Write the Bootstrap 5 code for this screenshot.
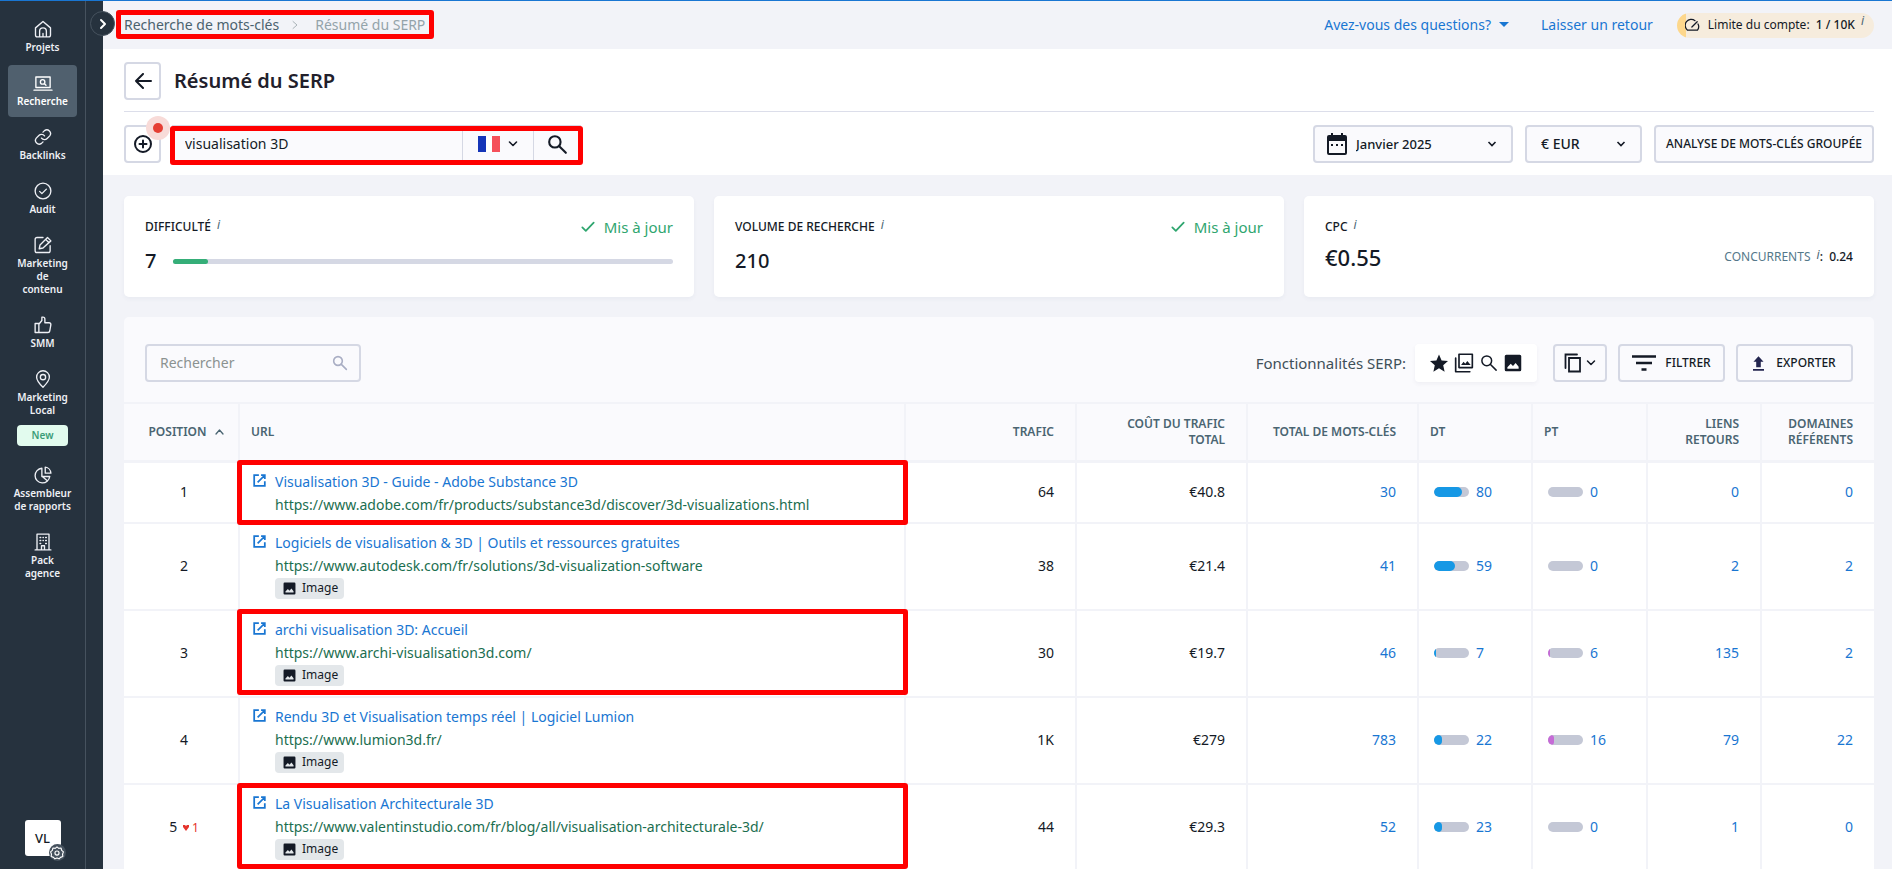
<!DOCTYPE html>
<html lang="fr">
<head>
<meta charset="utf-8">
<meta name="viewport" content="width=device-width, initial-scale=1">
<title>Résumé du SERP</title>
<link href="https://cdn.jsdelivr.net/npm/bootstrap@5.3.0/dist/css/bootstrap.min.css" rel="stylesheet">
<style>
:root{--ink:#141a26;--blue:#1976d2;--line:#d5d8e4;--grid:#f2f3f8;--navy:#26323e;--slate:#4a6572}
body{font:14px/20px "Noto Sans",sans-serif;color:var(--ink);background:var(--grid);border-top:1px solid var(--blue);height:100vh;overflow:hidden}
a{color:var(--blue);text-decoration:none}
.icon{display:block;flex:none;fill:none;stroke:currentColor;stroke-width:2;stroke-linecap:round;stroke-linejoin:round}
.solid{fill:currentColor;stroke:none}

.side{width:103px;background:var(--navy);z-index:2}
.side-main{width:86px;border-right:1px solid #46525e}
.side-nav{gap:2px;padding-top:10px}
.side-link{width:69px;padding:9px 0;color:#eef0f5;font-size:10px;line-height:13px;font-weight:600;text-align:center;border-radius:4px;display:flex;flex-direction:column;align-items:center;gap:3px}
.side-link .icon{stroke-width:1.8}
.side-link.active{background:#50606e;color:#fff}
.new-tag{width:51px;height:21px;line-height:21px;background:#e2fbee;color:#3c9d78;border-radius:4px;margin-top:5px}
.side-toggle{top:10px;right:-12px;width:25px;height:25px;border-radius:50%;border:1px solid #46525e;background:var(--navy);color:#fff}
.avatar{width:36px;height:36px;margin:auto 0 13px;background:#fff;border-radius:3px;font-size:13px;line-height:36px;font-weight:500;color:var(--ink)}
.avatar-gear{right:-5px;bottom:-5px;width:17px;height:17px;border-radius:50%;background:#46525e;color:#fff}

.page{overflow:auto;scrollbar-width:none;min-width:0}
.page::-webkit-scrollbar{display:none}
.topbar{height:48px;padding:0 18px 0 21px}
.crumb-link{color:#4b626e}
.crumb-now{color:#94a3aa}
.feedback{margin:0 24px 0 32px}
.limit{height:25px;padding:0 10px 0 8px;border-radius:13px;background:linear-gradient(90deg,#fdd78c 9px,#f6ecdd 9px);font-size:12px}
.limit b{font-weight:500}
.tip{font-size:12px;line-height:16px;font-style:italic;font-weight:400;color:#4a6572;align-self:flex-start;margin-left:6px}
.head{background:#fff;padding:0 18px 0 21px}
.head-title{padding:13px 0 11px;border-bottom:1px solid #dcdeea;gap:13px}
.head-title h1{font-size:20px;line-height:28px;font-weight:600;color:#22202b}
.head-tools{padding:13px 0 12px}
.ctl{height:38px;border:2px solid var(--line);border-radius:4px;background:#fafafd;color:var(--ink);font-size:12px;font-weight:500;padding:0;display:flex;align-items:center;justify-content:center}
.ctl.square{width:37px;background:#fff}
.dot{top:-9px;right:-9px;width:24px;height:24px;border-radius:50%;background:#f8dbd8}
.dot::after{content:"";position:absolute;inset:7px;border-radius:50%;background:#e53e33}
.kw{height:38px;border:1px solid var(--line);background:#fafafd;margin-left:11px}
.kw input{width:289px;border:0;background:none;padding:0 0 0 12px;color:var(--ink);outline:0}
.kw button{border:0;border-left:1px solid var(--line);background:none;color:var(--ink)}
.flag-btn{width:71px}
.find-btn{width:47px}
select.ctl{appearance:none;display:block;font-size:14px;background:#fafafd url("data:image/svg+xml,%3Csvg xmlns='http://www.w3.org/2000/svg' viewBox='0 0 10 10'%3E%3Cpath d='M1.500 3l3.500 3.500L8.500 3' fill='none' stroke='%23141a26' stroke-width='1.600'/%3E%3C/svg%3E") no-repeat right 14px center/10px}
select.month{width:200px;padding-left:41px;font-size:13px}
select.money{width:117px;padding-left:14px}
.cal{left:14px;top:8px;pointer-events:none}
.bulk{width:220px}

/* red review frames drawn over the page */
.framed{position:relative}
.framed::after{content:"";position:absolute;inset:var(--f,-2px -4px 1px -3px);border:5px solid #f00;border-radius:3px;pointer-events:none;z-index:1}
.frame-crumb{--f:-5px -9px -4px -8px}
.frame-kw{--f:0 -3px -3px -3px}
.frame-first{--f:-3px -4px -3px -3px}

.stats{padding:21px 18px 20px 21px;display:grid;grid-template-columns:repeat(3,1fr);gap:20px}
.stat{background:#fff;border-radius:5px;box-shadow:0 2px 4px rgba(60,70,110,.05);height:101px;padding:19px 21px}
.stat h2{font-size:12px;line-height:24px;font-weight:500;margin:0}
.stat h2 .tip{line-height:20px}
.stat .value{font-size:20px;line-height:28px;font-weight:500}
.stat .value.price{font-size:22px}
.fresh{color:#2fa66f;font-size:15px}
.meter{height:5px;border-radius:3px;background:var(--line);margin-left:17px}
.meter div{height:5px;border-radius:3px;background:#35ae78}
.rival{font-size:12px;color:#54788a}
.rival b{color:var(--ink);font-weight:500}

.panel{margin:0 18px 0 21px;background:#fafafd;border-radius:5px 5px 0 0;overflow:clip}
.tools{height:85px;padding:7px 21px 0}
.filter-box{width:216px;height:38px;border:2px solid var(--line);border-radius:4px;padding:0 11px 0 13px;color:#a9aec4}
.filter-box input{border:0;background:none;outline:0;width:160px;padding:0}
.filter-box input::placeholder{color:#8b9291}
.serp-label{color:#3f5059;font-size:15px}
.serp{background:#fff;border-radius:4px;height:38px;width:122px;margin:0 16px 0 9px;gap:6px;box-shadow:0 2px 4px rgba(60,70,110,.06)}
.grid-table{width:100%;table-layout:fixed;border-top:2px solid var(--grid)}
.grid-table th{background:#fafafd;color:var(--slate);font-size:12px;line-height:16px;font-weight:600;height:58px;border-bottom:3px solid var(--grid)}
.grid-table td{background:#fff;border-bottom:2px solid var(--grid)}
.grid-table th,.grid-table td{border-right:2px solid var(--grid);padding:0 21px}
.grid-table tr>:last-child{border-right:0}
.grid-table .num{text-align:right}
.grid-table .pos{text-align:center;padding:0 0 0 6px}
.grid-table .res{padding:7px 12px 6px}
.grid-table .bar{padding:0 0 0 15px}
.grid-table th.pos{padding-left:10px}
.grid-table th.res,.grid-table th.bar{padding:0 11px}
.res-line{line-height:23px;padding-left:23px;position:relative}
.res-line .icon{position:absolute;left:0;top:3px;color:var(--blue)}
.res-url{line-height:23px;padding-left:23px;color:#1b6e50;overflow-wrap:anywhere}
.img-tag{display:inline-flex;align-items:center;gap:6px;height:21px;padding:0 6px 0 8px;margin:1px 0 4px 23px;border-radius:4px;background:#e3e7ea;font-size:12px;vertical-align:top}
.drop{color:#e5342d;font-size:12px;margin-left:2px}
.score{display:flex;align-items:center;gap:7px}
.pill{width:35px;height:10px;border-radius:5px;background:#c4c8d6;overflow:hidden}
.pill div{height:10px;border-radius:5px;background:#1698e5}
.pill .pt{background:#c56bd6}
</style>
<script src="https://cdn.jsdelivr.net/npm/bootstrap@5.3.0/dist/js/bootstrap.bundle.min.js"></script>
</head>
<body class="d-flex">
<svg class="d-none">
  <symbol id="open" viewBox="0 0 24 24"><path d="M11 3.500H3.500v17h17V13M14.500 3.500h6v6M20 4L9 15" stroke-linecap="butt" stroke-linejoin="miter" stroke-width="2.800"/></symbol>
  <symbol id="picture" viewBox="0 0 24 24"><path fill-rule="evenodd" d="M3 1h18a2 2 0 0 1 2 2v18a2 2 0 0 1-2 2H3a2 2 0 0 1-2-2V3a2 2 0 0 1 2-2zm1.500 18.500h15v-2.500l-4-5-3.500 4-3-3-4.500 4.500z"/></symbol>
  <symbol id="search" viewBox="0 0 24 24"><circle cx="9" cy="9" r="6.500"/><path d="M14 14l7.500 7.500"/></symbol>
  <symbol id="down" viewBox="0 0 10 10"><path d="M1.500 3l3.500 3.500L8.500 3"/></symbol>
  <symbol id="check" viewBox="0 0 16 16"><path d="M1.500 8.500l4 4L14.500 3"/></symbol>
</svg>

<aside class="side h-100 flex-shrink-0 position-relative">
  <div class="side-main h-100 d-flex flex-column align-items-center">
    <nav class="side-nav d-flex flex-column align-items-center" aria-label="Principal">
      <a class="side-link" href="#"><svg class="icon" width="18" height="18" viewBox="0 0 24 24"><path d="M2 10.500L12 2l10 8.500V20a2.500 2.500 0 0 1-2.500 2.500h-15A2.500 2.500 0 0 1 2 20zM7.500 22V15a4.500 4.500 0 0 1 9 0v7M12 18v4"/></svg>Projets</a>
      <a class="side-link active" href="#"><svg class="icon" width="20" height="18" viewBox="0 0 26 24"><path d="M3.500 4h19v14h-19zM1 21.500h24"/><circle cx="12.500" cy="10.500" r="3"/><path d="M15 13l2 2"/></svg>Recherche</a>
      <a class="side-link" href="#"><svg class="icon" width="18" height="18" viewBox="0 0 24 24"><path d="M10 13.500a5 5 0 0 0 7.500.5l3.500-3.500a5 5 0 0 0-7-7L12 5.500M14 10.500a5 5 0 0 0-7.500-.5L3 13.500a5 5 0 0 0 7 7l2-2"/></svg>Backlinks</a>
      <a class="side-link" href="#"><svg class="icon" width="18" height="18" viewBox="0 0 24 24"><circle cx="12" cy="12" r="10.500"/><path d="M7.500 12.500l3 3 6-6"/></svg>Audit</a>
      <a class="side-link" href="#"><svg class="icon" width="18" height="18" viewBox="0 0 24 24"><path d="M12 2H4a2.500 2.500 0 0 0-2.500 2.500v15A2.500 2.500 0 0 0 4 22h15a2.500 2.500 0 0 0 2.500-2.500V13M7 17l1-5L18 2l4.500 4.500L12 16zM15.500 4.500L20 9"/></svg>Marketing<br>de<br>contenu</a>
      <a class="side-link" href="#"><svg class="icon" width="18" height="18" viewBox="0 0 24 24"><path d="M1.500 10h5v12h-5zM6.500 11l4-5V1.500h1.500a2.500 2.500 0 0 1 2.500 2.500v5H20a2.500 2.500 0 0 1 2.500 2.500L21 20a2.500 2.500 0 0 1-2.500 2h-12"/></svg>SMM</a>
      <a class="side-link" href="#"><svg class="icon" width="18" height="18" viewBox="0 0 24 24"><path d="M12 23C8 19 3.500 14.500 3.500 9.500a8.500 8.500 0 0 1 17 0C20.500 14.500 16 19 12 23z"/><circle cx="12" cy="9.500" r="3.500"/></svg><span>Marketing<br>Local</span><span class="new-tag">New</span></a>
      <a class="side-link" href="#"><svg class="icon" width="18" height="18" viewBox="0 0 24 24"><path d="M10.500 3A9.800 9.800 0 1 0 21 14H10.500zM15 1.500V9.500h7.500A8.500 8.500 0 0 0 15 1.500zM11 14l6 5"/></svg>Assembleur<br>de rapports</a>
      <a class="side-link" href="#"><svg class="icon" width="18" height="18" viewBox="0 0 24 24"><path d="M4 22.500V1.500h16v21M1.500 22.500h21M10 22v-5h4v5M8 6h1M12 6h.5M15.500 6h1M8 10h1M12 10h.5M15.500 10h1M8 14h1M15.500 14h1"/></svg>Pack<br>agence</a>
    </nav>
    <button class="avatar border-0 p-0 position-relative" type="button">VL
      <span class="avatar-gear position-absolute d-flex align-items-center justify-content-center"><svg class="icon" width="14" height="14" viewBox="0 0 24 24"><path d="M12 1.500l3 2.500 4-.500 1 4 3 2.500-1.500 4 .5 4-4 1.500L15.500 22 12 20.500 8.500 22 6 19.500 2 18l.5-4L1 10l3-2.500 1-4 4 .5z"/><circle cx="12" cy="12" r="3.500"/></svg></span>
    </button>
  </div>
  <button class="side-toggle position-absolute p-0 d-flex align-items-center justify-content-center" type="button" aria-label="Ouvrir le menu"><svg class="icon" width="12" height="12" viewBox="0 0 12 12"><path d="M4 2l4 4-4 4"/></svg></button>
</aside>

<main class="page flex-fill h-100">
  <header class="topbar d-flex align-items-center">
    <nav class="framed frame-crumb d-flex align-items-center" aria-label="Fil d’Ariane">
      <a class="crumb-link" href="#">Recherche de mots-clés</a>
      <svg class="icon mx-2" width="16" height="10" viewBox="0 0 14 10" style="color:#aab3b8;stroke-width:1"><path d="M5 1.500L9 5 5 8.500"/></svg>
      <span class="crumb-now ms-1">Résumé du SERP</span>
    </nav>
    <div class="ms-auto d-flex align-items-center">
      <a href="#" class="d-flex align-items-center">Avez-vous des questions? <svg class="icon solid ms-2" width="10" height="6" viewBox="0 0 10 6"><path d="M0 0h10L5 5z"/></svg></a>
      <a href="#" class="feedback">Laisser un retour</a>
      <div class="limit d-flex align-items-center">
        <svg class="icon me-2" width="15" height="15" viewBox="0 0 24 24"><path d="M16 4.300A9.500 9.500 0 0 0 4 19.500h16a9.500 9.500 0 0 0 .8-10M11 14.500L19.500 6"/></svg>
        <span>Limite du compte:&nbsp; <b>1 / 10K</b></span><span class="tip">i</span>
      </div>
    </div>
  </header>

  <section class="head">
    <div class="head-title d-flex align-items-center">
      <button class="ctl square" type="button" aria-label="Retour"><svg class="icon" width="18" height="16" viewBox="0 0 18 16"><path d="M17 8H2M9 1L2 8l7 7"/></svg></button>
      <h1 class="mb-0">Résumé du SERP</h1>
    </div>
    <div class="head-tools d-flex align-items-center">
      <div class="position-relative">
        <button class="ctl square" type="button" aria-label="Ajouter"><svg class="icon" width="18" height="18" viewBox="0 0 18 18"><circle cx="9" cy="9" r="8"/><path d="M9 5.500v7M5.500 9h7"/></svg></button>
        <span class="dot position-absolute"></span>
      </div>
      <form class="kw framed frame-kw d-flex" onsubmit="return false">
        <input type="text" value="visualisation 3D" aria-label="Mot-clé">
        <button class="flag-btn d-flex align-items-center justify-content-center" type="button" aria-label="Pays : France">
          <svg width="22" height="16" viewBox="0 0 22 16"><path fill="#1535b8" d="M0 0h8v16H0z"/><path fill="#fff" d="M8 0h6v16H8z"/><path fill="#f5505a" d="M14 0h8v16h-8z"/></svg>
          <svg class="icon ms-2" width="10" height="10" style="stroke-width:1.6"><use href="#down"/></svg>
        </button>
        <button class="find-btn d-flex align-items-center justify-content-center p-0" type="submit" aria-label="Rechercher"><svg class="icon" width="21" height="21" style="stroke-width:2.4"><use href="#search"/></svg></button>
      </form>
      <div class="ms-auto d-flex" style="gap:12px">
        <div class="position-relative">
          <select class="ctl month" aria-label="Mois"><option>Janvier 2025</option></select>
          <svg class="icon solid cal position-absolute" width="20" height="22" viewBox="0 0 20 22"><path fill-rule="evenodd" d="M4 0h2v2h8V0h2v2h2a2 2 0 0 1 2 2v16a2 2 0 0 1-2 2H2a2 2 0 0 1-2-2V4a2 2 0 0 1 2-2h2zM2 8v12h16V8zM4 11h2v2H4zm5 0h2v2H9zm5 0h2v2h-2z"/></svg>
        </div>
        <select class="ctl money" aria-label="Devise"><option>€ EUR</option></select>
        <button class="ctl bulk" type="button">ANALYSE DE MOTS-CLÉS GROUPÉE</button>
      </div>
    </div>
  </section>

  <section class="stats">
    <article class="stat">
      <div class="d-flex justify-content-between"><h2 class="d-flex">DIFFICULTÉ<span class="tip">i</span></h2><span class="fresh d-flex align-items-center gap-2"><svg class="icon" width="16" height="14"><use href="#check"/></svg>Mis à jour</span></div>
      <div class="d-flex align-items-center mt-2"><span class="value">7</span><div class="meter flex-fill"><div style="width:7%"></div></div></div>
    </article>
    <article class="stat">
      <div class="d-flex justify-content-between"><h2 class="d-flex">VOLUME DE RECHERCHE<span class="tip">i</span></h2><span class="fresh d-flex align-items-center gap-2"><svg class="icon" width="16" height="14"><use href="#check"/></svg>Mis à jour</span></div>
      <div class="value mt-2">210</div>
    </article>
    <article class="stat">
      <h2 class="d-flex">CPC<span class="tip">i</span></h2>
      <div class="d-flex align-items-center justify-content-between mt-1"><span class="value price">€0.55</span><span class="rival d-flex">CONCURRENTS<span class="tip">i</span><b>:&nbsp; 0.24</b></span></div>
    </article>
  </section>

  <section class="panel">
    <div class="tools d-flex align-items-center">
      <label class="filter-box d-flex align-items-center justify-content-between"><input type="search" placeholder="Rechercher" aria-label="Rechercher"><svg class="icon" width="16" height="16" style="stroke-width:2.4"><use href="#search"/></svg></label>
      <span class="serp-label ms-auto">Fonctionnalités SERP:</span>
      <div class="serp d-flex align-items-center justify-content-center">
        <svg class="icon solid" width="18" height="18" viewBox="0 0 24 24"><path d="M12 .5l3.500 8 8.500.8-6.400 5.700 1.900 8.500L12 19l-7.500 4.500L6.400 15 0 9.300l8.500-.8z"/></svg>
        <svg class="icon" width="20" height="20" viewBox="0 0 24 24"><path d="M6 1.500h16v16H6zM2 6v16.500h17"/><path class="solid" d="M8.500 14.500l3-4 2 2.500 2.500-3.500 4 5z"/></svg>
        <svg class="icon" width="18" height="18"><use href="#search"/></svg>
        <svg class="icon solid" width="18" height="18"><use href="#picture"/></svg>
      </div>
      <div class="d-flex" style="gap:11px">
        <button class="ctl gap-1" style="width:54px" type="button" aria-label="Copier"><svg class="icon" width="18" height="20" viewBox="0 0 18 20" style="stroke-width:1.800;stroke-linejoin:miter"><path d="M1.500 15V1.500H13M5 5h11v13.500H5z"/></svg><svg class="icon" width="10" height="10" style="stroke-width:1.500"><use href="#down"/></svg></button>
        <button class="ctl" style="width:107px;gap:9px" type="button"><svg class="icon" width="24" height="18" viewBox="0 0 24 18" style="stroke-linecap:butt;stroke-width:2.500"><path d="M0 2.500h24M4 9h16M9.500 15.500h5"/></svg>FILTRER</button>
        <button class="ctl" style="width:117px;gap:12px" type="button"><svg class="icon solid" width="11" height="15" viewBox="0 0 12 16" style="color:#23254f"><path d="M6 0l5.500 6H8.500v6h-5V6H.5zM0 14h12v2H0z"/></svg>EXPORTER</button>
      </div>
    </div>
    <table class="grid-table">
      <colgroup><col style="width:115px"><col><col style="width:171px"><col style="width:171px"><col style="width:171px"><col style="width:114px"><col style="width:115px"><col style="width:114px"><col style="width:113px"></colgroup>
      <thead><tr>
        <th class="pos"><span class="d-inline-flex align-items-center gap-2">POSITION <svg class="icon" width="9" height="6" viewBox="0 0 9 6" style="stroke-width:1.300"><path d="M1 5l3.500-4L8 5"/></svg></span></th>
        <th class="res">URL</th><th class="num">TRAFIC</th><th class="num">COÛT DU TRAFIC TOTAL</th><th class="num">TOTAL DE MOTS-CLÉS</th><th class="bar">DT</th><th class="bar">PT</th><th class="num">LIENS RETOURS</th><th class="num">DOMAINES RÉFÉRENTS</th>
      </tr></thead>
      <tbody>
      <tr>
        <td class="pos">1</td>
        <td class="res framed frame-first"><div class="res-line"><svg class="icon" width="15" height="15"><use href="#open"/></svg><a href="#">Visualisation 3D - Guide - Adobe Substance 3D</a></div><div class="res-url">https://www.adobe.com/fr/products/substance3d/discover/3d-visualizations.html</div></td>
        <td class="num">64</td><td class="num">€40.8</td><td class="num"><a href="#">30</a></td>
        <td class="bar"><div class="score"><div class="pill"><div style="width:80%"></div></div><a href="#">80</a></div></td>
        <td class="bar"><div class="score"><div class="pill"></div><a href="#">0</a></div></td>
        <td class="num"><a href="#">0</a></td><td class="num"><a href="#">0</a></td>
      </tr>
      <tr>
        <td class="pos">2</td>
        <td class="res"><div class="res-line"><svg class="icon" width="15" height="15"><use href="#open"/></svg><a href="#">Logiciels de visualisation &amp; 3D | Outils et ressources gratuites</a></div><div class="res-url">https://www.autodesk.com/fr/solutions/3d-visualization-software</div><span class="img-tag"><svg class="icon solid" width="13" height="13"><use href="#picture"/></svg>Image</span></td>
        <td class="num">38</td><td class="num">€21.4</td><td class="num"><a href="#">41</a></td>
        <td class="bar"><div class="score"><div class="pill"><div style="width:59%"></div></div><a href="#">59</a></div></td>
        <td class="bar"><div class="score"><div class="pill"></div><a href="#">0</a></div></td>
        <td class="num"><a href="#">2</a></td><td class="num"><a href="#">2</a></td>
      </tr>
      <tr>
        <td class="pos">3</td>
        <td class="res framed"><div class="res-line"><svg class="icon" width="15" height="15"><use href="#open"/></svg><a href="#">archi visualisation 3D: Accueil</a></div><div class="res-url">https://www.archi-visualisation3d.com/</div><span class="img-tag"><svg class="icon solid" width="13" height="13"><use href="#picture"/></svg>Image</span></td>
        <td class="num">30</td><td class="num">€19.7</td><td class="num"><a href="#">46</a></td>
        <td class="bar"><div class="score"><div class="pill"><div style="width:7%"></div></div><a href="#">7</a></div></td>
        <td class="bar"><div class="score"><div class="pill"><div class="pt" style="width:6%"></div></div><a href="#">6</a></div></td>
        <td class="num"><a href="#">135</a></td><td class="num"><a href="#">2</a></td>
      </tr>
      <tr>
        <td class="pos">4</td>
        <td class="res"><div class="res-line"><svg class="icon" width="15" height="15"><use href="#open"/></svg><a href="#">Rendu 3D et Visualisation temps réel | Logiciel Lumion</a></div><div class="res-url">https://www.lumion3d.fr/</div><span class="img-tag"><svg class="icon solid" width="13" height="13"><use href="#picture"/></svg>Image</span></td>
        <td class="num">1K</td><td class="num">€279</td><td class="num"><a href="#">783</a></td>
        <td class="bar"><div class="score"><div class="pill"><div style="width:22%"></div></div><a href="#">22</a></div></td>
        <td class="bar"><div class="score"><div class="pill"><div class="pt" style="width:16%"></div></div><a href="#">16</a></div></td>
        <td class="num"><a href="#">79</a></td><td class="num"><a href="#">22</a></td>
      </tr>
      <tr>
        <td class="pos">5 <span class="drop"><svg width="6" height="6" viewBox="0 0 6 6" fill="currentColor"><path d="M0 2V0h2l1 1 1-1h2v2L3 6z"/></svg> 1</span></td>
        <td class="res framed"><div class="res-line"><svg class="icon" width="15" height="15"><use href="#open"/></svg><a href="#">La Visualisation Architecturale 3D</a></div><div class="res-url">https://www.valentinstudio.com/fr/blog/all/visualisation-architecturale-3d/</div><span class="img-tag"><svg class="icon solid" width="13" height="13"><use href="#picture"/></svg>Image</span></td>
        <td class="num">44</td><td class="num">€29.3</td><td class="num"><a href="#">52</a></td>
        <td class="bar"><div class="score"><div class="pill"><div style="width:23%"></div></div><a href="#">23</a></div></td>
        <td class="bar"><div class="score"><div class="pill"></div><a href="#">0</a></div></td>
        <td class="num"><a href="#">1</a></td><td class="num"><a href="#">0</a></td>
      </tr>
      </tbody>
    </table>
  </section>
</main>
</body>
</html>
